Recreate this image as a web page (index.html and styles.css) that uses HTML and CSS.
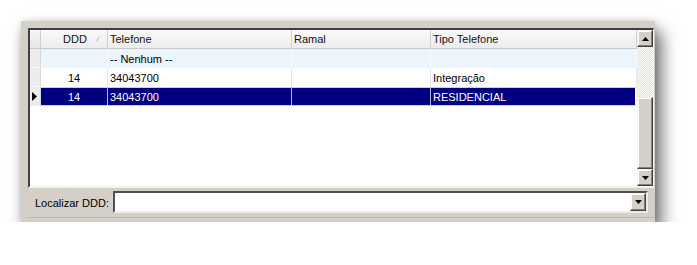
FILE: index.html
```html
<!DOCTYPE HTML>
<html>
<head>
  <title>Telefones</title>
  <meta name="viewport" content="width=device-width, initial-scale=1">
  <link rel="stylesheet" href="styles.css">
</head>
<body>
  <div class="frame">
    <div class="grid-box">
      <div class="table">
        <div class="row head">
          <div class="cell ind"></div>
          <div class="cell ddd-head">
            <span></span>
            <span>DDD</span>
            <svg class="sort" width="4" height="6" viewBox="0 0 4 6"><path d="M0.5 5.5 L3.5 0.5" stroke="#b8b8b8" stroke-width="1"/></svg>
          </div>
          <div class="cell">Telefone</div>
          <div class="cell">Ramal</div>
          <div class="cell">Tipo Telefone</div>
        </div>
        <div class="row empty">
          <div class="cell ind"></div>
          <div class="cell num"></div>
          <div class="cell">-- Nenhum --</div>
          <div class="cell"></div>
          <div class="cell"></div>
        </div>
        <div class="row">
          <div class="cell ind"></div>
          <div class="cell num">14</div>
          <div class="cell">34043700</div>
          <div class="cell"></div>
          <div class="cell">Integração</div>
        </div>
        <div class="row selected">
          <div class="cell ind">
            <svg width="5" height="9" viewBox="0 0 5 9"><path d="M0 0 L5 4.5 L0 9 Z" fill="#000"/></svg>
          </div>
          <div class="cell num">14</div>
          <div class="cell">34043700</div>
          <div class="cell"></div>
          <div class="cell">RESIDENCIAL</div>
        </div>
      </div>
      <div class="vscroll">
        <div class="sbtn">
          <svg width="7" height="4" viewBox="0 0 7 4"><path d="M3.5 0 L7 4 L0 4 Z" fill="#000"/></svg>
        </div>
        <div class="track track-top"></div>
        <div class="sbtn thumb"></div>
        <div class="sbtn">
          <svg width="7" height="4" viewBox="0 0 7 4"><path d="M0 0 L7 0 L3.5 4 Z" fill="#000"/></svg>
        </div>
      </div>
    </div>
    <div class="search">
      <label class="search-label">Localizar DDD:</label>
      <div class="combo">
        <div class="combo-btn">
          <svg width="7" height="4" viewBox="0 0 7 4"><path d="M0 0 L7 0 L3.5 4 Z" fill="#000"/></svg>
        </div>
      </div>
    </div>
  </div>
</body>
</html>
```

FILE: styles.css
```css
body {
  margin: 0;
  background-color: #fff;
  font-family: "Liberation Sans", Arial, sans-serif;
  font-size: 11px;
  color: #000;
}

.frame {
  margin: 21px 0 0 21px;
  width: 634px;
  box-sizing: border-box;
  padding: 7px 1px 4px 7px;
  background-color: #d4d0c8;
  box-shadow: 6px 10px 16px rgba(0, 0, 0, 0.6), 0 0 6px rgba(0, 0, 0, 0.12);
}

.grid-box {
  display: flex;
  height: 160px;
  box-sizing: border-box;
  border-top: 2px solid #404040;
  border-left: 2px solid #404040;
  border-right: 1px solid #f4f3ee;
  border-bottom: 2px solid #f4f3ee;
  background-color: #fff;
}

.table {
  width: 607px;
}

.row {
  display: grid;
  grid-template-columns: 11px 67px 184px 139px 206px;
  height: 19px;
}

.cell {
  display: flex;
  align-items: center;
  padding-left: 2px;
  border-right: 1px solid #e6e6e6;
  box-sizing: border-box;
  white-space: nowrap;
  overflow: hidden;
}

.cell.ind {
  padding: 0 0 0 2px;
  background-color: #ececec;
  border-right: 1px solid #d8d8d8;
  border-bottom: 1px solid #f8f8f8;
}

.cell.num {
  justify-content: center;
  padding-left: 0;
}

.head .cell {
  background: linear-gradient(#fafafa, #ececec);
  border-right: 1px solid #cfcfcf;
  border-bottom: 1px solid #c8c8c8;
  color: #111;
}

.head .cell.ind {
  background: linear-gradient(#f6f6f6, #e6e6e6);
}

.ddd-head {
  display: grid;
  grid-template-columns: 1fr auto 1fr;
  align-items: center;
}

.ddd-head .sort {
  justify-self: end;
  margin-right: 7px;
}

.empty .cell {
  background-color: #eaf5fd;
  border-right-color: #f6fbff;
}

.empty .cell.ind {
  background-color: #ececec;
  border-right-color: #d8d8d8;
}

.selected .cell {
  background-color: #000080;
  color: #fff;
  border-top: 1px solid #c8d0e8;
  border-bottom: 1px solid #c8d0e8;
  border-right: 1px solid #b0b8e0;
}

.selected .cell:last-child {
  border-right: 2px solid #fff;
}

.selected .cell.ind {
  background-color: #ececec;
  border-top: 0;
  border-bottom: 0;
  border-right: 1px solid #d8d8d8;
}

.vscroll {
  width: 16px;
  display: flex;
  flex-direction: column;
}

.sbtn {
  height: 17px;
  box-sizing: border-box;
  display: flex;
  align-items: center;
  justify-content: center;
  background-color: #d4d0c8;
  border-top: 1px solid #f4f3ee;
  border-left: 1px solid #f4f3ee;
  border-right: 1px solid #404040;
  border-bottom: 1px solid #404040;
  box-shadow: inset -1px -1px 0 #808080, inset 1px 1px 0 #fff;
}

.track {
  background-color: #f4f3ef;
  background-image: repeating-conic-gradient(#e4e2dc 0 25%, #fbfbf9 0 50%);
  background-size: 2px 2px;
}

.track-top {
  height: 50px;
}

.thumb {
  height: 72px;
}

.search {
  display: flex;
  align-items: center;
  height: 30px;
  box-sizing: border-box;
  border-bottom: 1px solid #bcb8b0;
  padding-left: 7px;
}

.search-label {
  width: 78px;
}

.combo {
  width: 535px;
  height: 22px;
  box-sizing: border-box;
  margin-top: -1px;
  display: flex;
  justify-content: flex-end;
  align-items: center;
  background-color: #fff;
  border-top: 2px solid #505050;
  border-left: 2px solid #505050;
  border-right: 2px solid #ecebe6;
  border-bottom: 2px solid #ecebe6;
}

.combo-btn {
  width: 16px;
  height: 18px;
  box-sizing: border-box;
  display: flex;
  align-items: center;
  justify-content: center;
  background-color: #d4d0c8;
  border-top: 1px solid #f4f3ee;
  border-left: 1px solid #f4f3ee;
  border-right: 1px solid #404040;
  border-bottom: 1px solid #404040;
  box-shadow: inset -1px -1px 0 #808080, inset 1px 1px 0 #fff;
}
```
